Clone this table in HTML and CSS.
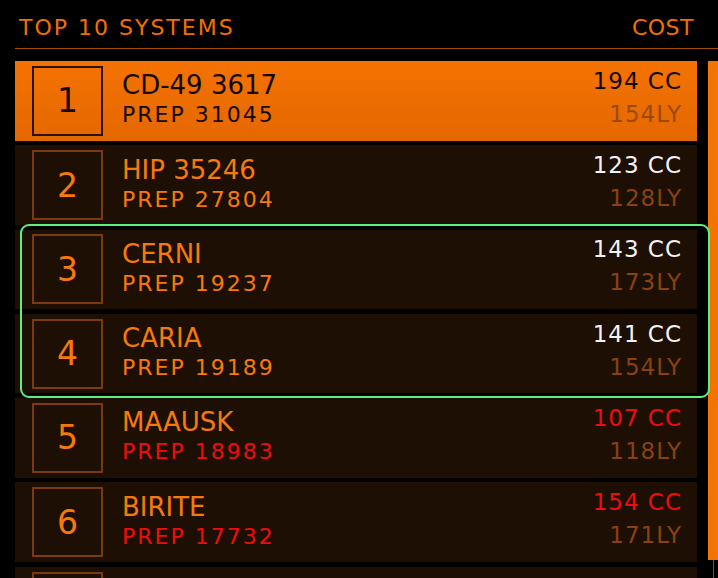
FILE: index.html
```html
<!DOCTYPE html>
<html lang="en">
<head>
    <meta charset="UTF-8">
    <meta name="viewport" content="width=device-width, initial-scale=1.0">
    <title>Top 10 Systems</title>
    <link rel="stylesheet" href="styles.css">
</head>
<body>
    <div class="panel">
        <div class="header">
            <div class="header-title">TOP 10 SYSTEMS</div>
            <div class="header-cost">COST</div>
        </div>

        <div class="main">
            <div class="list">
                <div class="row selected">
                    <div class="rank">1</div>
                    <div class="info">
                        <div class="name">CD-49 3617</div>
                        <div class="prep">PREP 31045</div>
                    </div>
                    <div class="cost">
                        <div class="cc">194 CC</div>
                        <div class="ly">154LY</div>
                    </div>
                </div>

                <div class="row">
                    <div class="rank">2</div>
                    <div class="info">
                        <div class="name">HIP 35246</div>
                        <div class="prep">PREP 27804</div>
                    </div>
                    <div class="cost">
                        <div class="cc">123 CC</div>
                        <div class="ly">128LY</div>
                    </div>
                </div>

                <div class="row">
                    <div class="rank">3</div>
                    <div class="info">
                        <div class="name">CERNI</div>
                        <div class="prep">PREP 19237</div>
                    </div>
                    <div class="cost">
                        <div class="cc">143 CC</div>
                        <div class="ly">173LY</div>
                    </div>
                </div>

                <div class="row">
                    <div class="rank">4</div>
                    <div class="info">
                        <div class="name">CARIA</div>
                        <div class="prep">PREP 19189</div>
                    </div>
                    <div class="cost">
                        <div class="cc">141 CC</div>
                        <div class="ly">154LY</div>
                    </div>
                </div>

                <div class="row">
                    <div class="rank">5</div>
                    <div class="info">
                        <div class="name">MAAUSK</div>
                        <div class="prep warn">PREP 18983</div>
                    </div>
                    <div class="cost">
                        <div class="cc warn">107 CC</div>
                        <div class="ly">118LY</div>
                    </div>
                </div>

                <div class="row">
                    <div class="rank">6</div>
                    <div class="info">
                        <div class="name">BIRITE</div>
                        <div class="prep warn">PREP 17732</div>
                    </div>
                    <div class="cost">
                        <div class="cc warn">154 CC</div>
                        <div class="ly">171LY</div>
                    </div>
                </div>

                <div class="row">
                    <div class="rank">7</div>
                    <div class="info">
                        <div class="name">LHS 2029</div>
                        <div class="prep warn">PREP 16410</div>
                    </div>
                    <div class="cost">
                        <div class="cc warn">134 CC</div>
                        <div class="ly">162LY</div>
                    </div>
                </div>

                <!-- marco de seleccion del cursor -->
                <div class="focus-frame"></div>
            </div>

            <div class="scroll">
                <div class="scroll-thumb"></div>
                <div class="scroll-track"></div>
            </div>
        </div>
    </div>
</body>
</html>
```

FILE: styles.css
```css
/* Estilos generales */
body {
    margin: 0;
    background-color: #000000;
    font-family: 'DejaVu Sans', Arial, sans-serif;
    color: #f57a0a;
    height: 578px;
    overflow: hidden;
}

.panel {
    padding-left: 15px;
}

/* Cabecera */
.header {
    display: flex;
    justify-content: space-between;
    padding: 17px 24px 9px 4px;
    border-bottom: 1px solid #a34d00;
    font-size: 22px;
    line-height: 22px;
    color: #f07000;
}

.header-title {
    letter-spacing: 2px;
}

.header-cost {
    letter-spacing: 0.5px;
}

/* Lista */
.main {
    display: flex;
    margin-top: 12px;
}

.list {
    position: relative;
    display: flex;
    flex-direction: column;
    gap: 4.8px;
    width: 682px;
}

.row {
    display: flex;
    align-items: center;
    height: 79.5px;
    flex-shrink: 0;
    padding: 0 15px 0 17px;
    background-color: #1e0f04;
}

.row.selected {
    background: linear-gradient(#f47200, #e46800);
}

.rank {
    width: 67px;
    height: 66px;
    border: 2px solid #7a3a0e;
    display: flex;
    align-items: center;
    justify-content: center;
    font-size: 33px;
    line-height: 33px;
    flex-shrink: 0;
}

.info {
    flex: 1;
    margin-left: 19px;
    padding-bottom: 3px;
}

.name {
    font-size: 26px;
    line-height: 26px;
}

.prep {
    margin-top: 6px;
    font-size: 22px;
    line-height: 22px;
    letter-spacing: 2px;
}

.cost {
    text-align: right;
    padding-bottom: 6px;
}

.cc {
    font-size: 23px;
    line-height: 23px;
    letter-spacing: 1px;
    color: #f2f2f2;
}

.ly {
    margin-top: 10px;
    font-size: 23px;
    line-height: 23px;
    letter-spacing: 1px;
    color: #87420f;
}

.warn {
    color: #f00c0c;
}

/* Fila seleccionada */
.selected .rank {
    border-color: #2a1200;
}

.selected .rank,
.selected .name,
.selected .prep,
.selected .cc {
    color: #120800;
}

.selected .ly {
    color: #9a4a08;
}

.focus-frame {
    position: absolute;
    left: 5px;
    top: 163px;
    width: 686px;
    height: 170px;
    border: 2px solid #5cf07c;
    border-radius: 9px;
}

/* Barra de desplazamiento */
.scroll {
    display: flex;
    flex-direction: column;
    align-items: center;
    width: 10px;
    margin-left: 11px;
}

.scroll-thumb {
    width: 10px;
    height: 499px;
    background-color: #f57300;
}

.scroll-track {
    width: 1px;
    flex: 1;
    background-color: #a04c00;
}
```
